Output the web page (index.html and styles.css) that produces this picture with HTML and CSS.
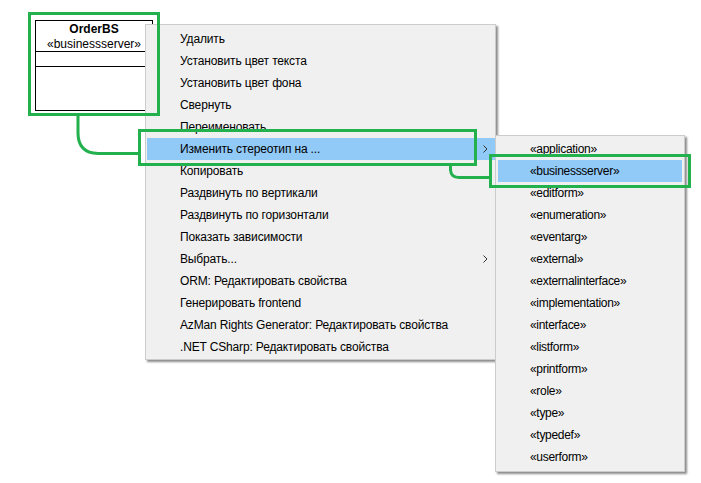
FILE: index.html
```html
<!DOCTYPE html>
<html lang="ru">
<head>
<meta charset="utf-8">
<link rel="stylesheet" href="styles.css">
</head>
<body>
<div class="canvas">
  <div class="node">
    <div class="node-head">
      <div class="node-name">OrderBS</div>
      <div class="node-stereo">«businessserver»</div>
    </div>
    <div class="node-attrs"></div>
    <div class="node-ops"></div>
  </div>

  <div class="menu main-menu">
    <div class="item">Удалить</div>
    <div class="item">Установить цвет текста</div>
    <div class="item">Установить цвет фона</div>
    <div class="item">Свернуть</div>
    <div class="item">Переименовать</div>
    <div class="item active">Изменить стереотип на ...<svg class="chev" width="5" height="8" viewBox="0 0 5 8"><path d="M0.5 0.5 L4 4 L0.5 7.5" fill="none" stroke="#333" stroke-width="1"/></svg></div>
    <div class="item">Копировать</div>
    <div class="item">Раздвинуть по вертикали</div>
    <div class="item">Раздвинуть по горизонтали</div>
    <div class="item">Показать зависимости</div>
    <div class="item">Выбрать...<svg class="chev" width="5" height="8" viewBox="0 0 5 8"><path d="M0.5 0.5 L4 4 L0.5 7.5" fill="none" stroke="#333" stroke-width="1"/></svg></div>
    <div class="item">ORM: Редактировать свойства</div>
    <div class="item">Генерировать frontend</div>
    <div class="item">AzMan Rights Generator: Редактировать свойства</div>
    <div class="item">.NET CSharp: Редактировать свойства</div>
  </div>

  <div class="menu sub-menu">
    <div class="item">«application»</div>
    <div class="item active">«businessserver»</div>
    <div class="item">«editform»</div>
    <div class="item">«enumeration»</div>
    <div class="item">«eventarg»</div>
    <div class="item">«external»</div>
    <div class="item">«externalinterface»</div>
    <div class="item">«implementation»</div>
    <div class="item">«interface»</div>
    <div class="item">«listform»</div>
    <div class="item">«printform»</div>
    <div class="item">«role»</div>
    <div class="item">«type»</div>
    <div class="item">«typedef»</div>
    <div class="item">«userform»</div>
  </div>

  <svg class="links" width="701" height="483" viewBox="0 0 701 483">
    <path d="M78 116 V133 Q78 153 98 153.5 H139" fill="none" stroke="#22b14c" stroke-width="3"/>
    <path d="M450.5 165 V170 Q451 177.5 459 177.5 H490" fill="none" stroke="#22b14c" stroke-width="3"/>
  </svg>
  <div class="mark mark-node"></div>
  <div class="mark mark-item"></div>
  <div class="mark mark-sub"></div>
</div>
</body>
</html>
```

FILE: styles.css
```css
* { box-sizing: border-box; }
html, body { margin: 0; padding: 0; background: #ffffff; }
.canvas {
  position: relative;
  width: 701px;
  height: 483px;
  overflow: hidden;
  font-family: "Liberation Sans", Arial, sans-serif;
  font-size: 12px;
  color: #000;
}
.node {
  position: absolute;
  left: 35px;
  top: 20px;
  width: 118px;
  height: 91px;
  border: 1px solid #000;
  background: #fff;
  display: flex;
  flex-direction: column;
}
.node-head {
  height: 31px;
  border-bottom: 1px solid #000;
  text-align: center;
  line-height: 15px;
  padding-top: 1px;
}
.node-name { font-weight: bold; font-size: 12px; }
.node-stereo { font-size: 12px; }
.node-attrs { height: 15px; border-bottom: 1px solid #000; }
.node-ops { flex: 1; }

.menu {
  position: absolute;
  background: #f0f0f0;
  border: 1px solid #cccccc;
  display: flex;
  flex-direction: column;
  box-shadow: 2px 2px 2px rgba(0,0,0,0.45);
}
.main-menu {
  left: 145px;
  top: 24px;
  width: 351px;
  padding: 3px 0 1px 1px;
  z-index: 1;
  letter-spacing: -0.15px;
}
.sub-menu {
  left: 495px;
  top: 135px;
  width: 190px;
  padding: 2px 2px 3px 2px;
  z-index: 2;
  letter-spacing: -0.3px;
}
.item {
  height: 22px;
  line-height: 22px;
  display: flex;
  align-items: center;
  white-space: nowrap;
}
.main-menu .item { padding-left: 33px; padding-right: 7px; }
.sub-menu .item { padding-left: 32px; }
.item.active { background: #91c9f7; }
.chev { margin-left: auto; }

.links { position: absolute; left: 0; top: 0; z-index: 3; }
.mark {
  position: absolute;
  border: 3px solid #22b14c;
  z-index: 4;
}
.mark-node { left: 28px; top: 12px; width: 132px; height: 104px; }
.mark-item { left: 138px; top: 129px; width: 339px; height: 37px; }
.mark-sub { left: 489px; top: 154px; width: 202px; height: 34px; }
```
